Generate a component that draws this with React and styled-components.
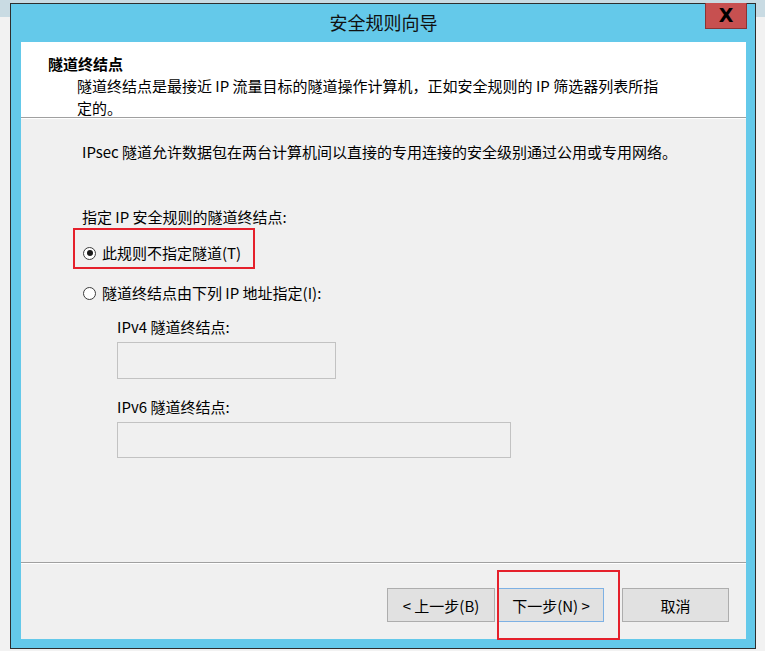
import React from "react";
import styled, { createGlobalStyle, css } from "styled-components";

const GlobalStyle = createGlobalStyle`
  html, body {
    margin: 0;
    padding: 0;
  }
  body {
    width: 765px;
    height: 651px;
    overflow: hidden;
    background: #efefef;
    font-family: "Noto Sans CJK SC", "Microsoft YaHei", sans-serif;
    color: #000;
  }
`;

const Desktop = styled.div`
  width: 765px;
  height: 651px;
  box-sizing: border-box;
  padding: 3px 9px 2px 10px;
  background: linear-gradient(to bottom, #c9dbe3 0, #c9dbe3 17px, #f2f2f2 17px);
  display: flex;
`;

const Window = styled.div`
  width: 746px;
  height: 646px;
  box-sizing: border-box;
  border: 1px solid #2e2e2e;
  background: #64c9ea;
  padding: 0 9px 9px 10px;
  display: flex;
  flex-direction: column;
`;

const TitleBar = styled.div`
  height: 38px;
  display: grid;
  grid-template-columns: 1fr auto 1fr;
  align-items: center;
`;

const Title = styled.div`
  grid-column: 2;
  font-size: 18px;
  line-height: 24px;
  margin-top: -2px;
  color: #111;
`;

const CloseButton = styled.div`
  grid-column: 3;
  justify-self: end;
  align-self: start;
  margin-top: -1px;
  margin-right: -1px;
  width: 42px;
  height: 26px;
  box-sizing: border-box;
  background: #c75050;
  border: 1px solid #8a3434;
  border-top: none;
  display: flex;
  align-items: center;
  justify-content: center;
  font-family: "DejaVu Sans", sans-serif;
  font-weight: bold;
  font-size: 19px;
  line-height: 1;
  color: #000;
`;

const Client = styled.div`
  flex: 1;
  background: #f0f0f0;
  display: flex;
  flex-direction: column;
`;

const Header = styled.div`
  height: 76px;
  box-sizing: border-box;
  background: #fff;
  border-bottom: 1px solid #a0a0a0;
  box-shadow: 0 1px 0 #fff;
  padding: 11px 0 0 27px;
  font-size: 15px;
  line-height: 22px;
`;

const HeaderTitle = styled.div`
  font-weight: bold;
`;

const HeaderDesc = styled.div`
  padding-left: 29px;
`;

const Content = styled.div`
  flex: 1;
  padding: 23px 0 0 61px;
  font-size: 15px;
  line-height: 22px;
  display: flex;
  flex-direction: column;
  align-items: flex-start;
`;

const Text = styled.div`
  margin-top: ${(p) => p.$gap || 0}px;
  margin-left: ${(p) => p.$indent || 0}px;
`;

const RadioRow = styled.label`
  position: relative;
  display: inline-flex;
  align-items: center;
  gap: 6px;
  margin-top: ${(p) => p.$gap || 0}px;
  padding-left: 1px;
  ${(p) =>
    p.$marked &&
    css`
      &::after {
        content: "";
        position: absolute;
        left: -9px;
        top: -14px;
        width: 182px;
        height: 41px;
        box-sizing: border-box;
        border: 2px solid #e5202b;
      }
    `}
`;

const RadioCircle = styled.span`
  width: 13px;
  height: 13px;
  box-sizing: border-box;
  border-radius: 50%;
  border: 1px solid #3c3c3c;
  background: #fff;
  display: flex;
  align-items: center;
  justify-content: center;
  &::before {
    content: "";
    width: 6px;
    height: 6px;
    border-radius: 50%;
    background: ${(p) => (p.$checked ? "#1a1a1a" : "transparent")};
  }
`;

const AddressBox = styled.div`
  margin-top: 4px;
  margin-left: 35px;
  width: ${(p) => p.$width}px;
  height: ${(p) => p.$height}px;
  box-sizing: border-box;
  border: 1px solid #c2c2c2;
  background: #f0f0f0;
`;

const Footer = styled.div`
  height: 77px;
  box-sizing: border-box;
  border-top: 1px solid #a0a0a0;
  box-shadow: inset 0 1px 0 #fff;
  padding: 25px 17px 0 0;
  display: flex;
  justify-content: flex-end;
  align-items: flex-start;
`;

const Button = styled.div`
  position: relative;
  width: ${(p) => p.$width}px;
  height: 34px;
  margin-left: ${(p) => p.$gap || 0}px;
  box-sizing: border-box;
  background: #e1e1e1;
  border: 1px solid ${(p) => (p.$default ? "#7eb1e4" : "#adadad")};
  display: flex;
  align-items: center;
  justify-content: center;
  font-size: 15px;
  color: #000;
  ${(p) =>
    p.$marked &&
    css`
      &::after {
        content: "";
        position: absolute;
        left: -2px;
        top: -19px;
        right: -17px;
        bottom: -19px;
        border: 2px solid #e5202b;
      }
    `}
`;

export default function App() {
  return (
    <>
      <GlobalStyle />
      <Desktop>
        <Window>
          <TitleBar>
            <Title>安全规则向导</Title>
            <CloseButton>X</CloseButton>
          </TitleBar>
          <Client>
            <Header>
              <HeaderTitle>隧道终结点</HeaderTitle>
              <HeaderDesc>
                隧道终结点是最接近 IP 流量目标的隧道操作计算机，正如安全规则的 IP 筛选器列表所指
                <br />
                定的。
              </HeaderDesc>
            </Header>
            <Content>
              <Text>IPsec 隧道允许数据包在两台计算机间以直接的专用连接的安全级别通过公用或专用网络。</Text>
              <Text $gap={43}>指定 IP 安全规则的隧道终结点:</Text>
              <RadioRow $gap={14} $marked>
                <RadioCircle $checked />
                此规则不指定隧道(T)
              </RadioRow>
              <RadioRow $gap={18}>
                <RadioCircle />
                隧道终结点由下列 IP 地址指定(I):
              </RadioRow>
              <Text $gap={12} $indent={35}>IPv4 隧道终结点:</Text>
              <AddressBox $width={219} $height={37} />
              <Text $gap={17} $indent={35}>IPv6 隧道终结点:</Text>
              <AddressBox $width={394} $height={36} />
            </Content>
            <Footer>
              <Button $width={108}>&lt; 上一步(B)</Button>
              <Button $width={106} $gap={3} $default $marked>
                下一步(N) &gt;
              </Button>
              <Button $width={107} $gap={18}>取消</Button>
            </Footer>
          </Client>
        </Window>
      </Desktop>
    </>
  );
}
